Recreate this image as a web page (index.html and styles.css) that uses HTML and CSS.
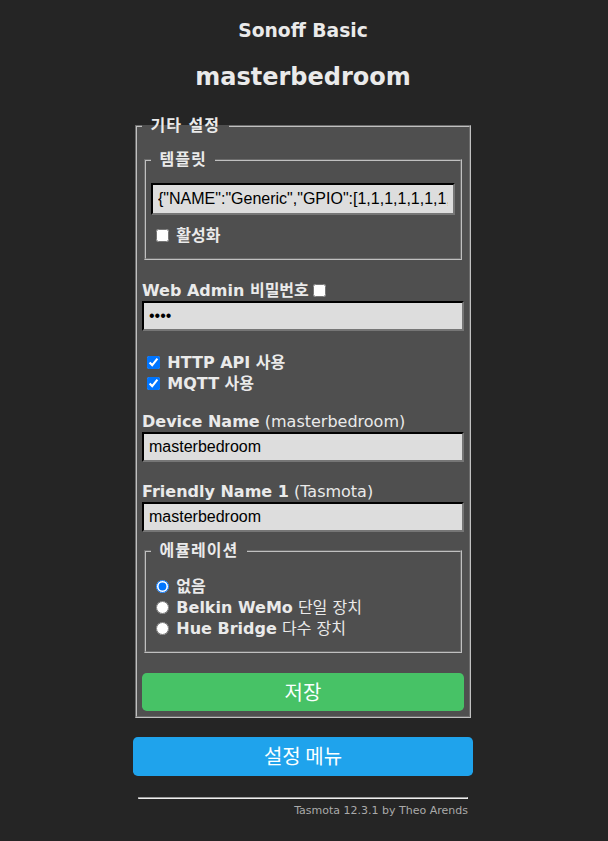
FILE: index.html
```
<!DOCTYPE html>
<html>
  <head>
    <title>Sonoff Basic - 기타 설정</title>
    <link rel="stylesheet" href="styles.css">
  </head>
  <body>
    <div class="wrap">
      <div class="head">
        <h3>Sonoff Basic</h3>
        <h2>masterbedroom</h2>
      </div>
      <fieldset class="box">
        <legend><b>&nbsp;기타 설정&nbsp;</b></legend>
        <form method="get" action="co">
          <p class="gap"></p>
          <fieldset class="box tpl">
            <legend><b>&nbsp;템플릿&nbsp;</b></legend>
            <p class="tpl-in"><input id="t1" class="field" value='{"NAME":"Generic","GPIO":[1,1,1,1,1,1,1,1,1,1,1,1,1,1],"FLAG":0,"BASE":18}'></p>
            <p class="tpl-on"><label><input id="t2" type="checkbox" class="tick"><b>활성화</b></label></p>
          </fieldset>
          <br>
          <label class="ko"><b>Web Admin 비밀번호</b><input type="checkbox" class="tick after"></label><br>
          <input id="wp" class="field line" type="password" value="****">
          <div class="opts">
            <label class="ko"><input id="b1" type="checkbox" class="tick" checked><b>HTTP API 사용</b></label><br>
            <label class="ko"><input id="b2" type="checkbox" class="tick" checked><b>MQTT 사용</b></label>
          </div>
          <label><b>Device Name</b> (masterbedroom)</label><br>
          <input id="dn" class="field line" value="masterbedroom">
          <br><br>
          <label><b>Friendly Name 1</b> (Tasmota)</label><br>
          <input id="a0" class="field line" value="masterbedroom">
          <br>
          <fieldset class="box emu">
            <legend><b>&nbsp;에뮬레이션&nbsp;</b></legend>
            <p>
              <input id="r1" name="emu" type="radio" class="tick" checked><b>없음</b><br>
              <input id="r2" name="emu" type="radio" class="tick"><b>Belkin WeMo</b> 단일 장치<br>
              <input id="r3" name="emu" type="radio" class="tick"><b>Hue Bridge</b> 다수 장치<br>
            </p>
          </fieldset>
          <br>
          <button name="save" type="submit" class="button bgrn">저장</button>
        </form>
      </fieldset>
      <form class="menu" action="cn" method="get">
        <button class="button">설정 메뉴</button>
      </form>
      <div class="foot">
        <hr>
        <a href="#">Tasmota 12.3.1 by Theo Arends</a>
      </div>
    </div>
  </body>
</html>
```

FILE: styles.css
```
body {
  text-align: center;
  font-family: "DejaVu Sans", "Noto Sans CJK KR", sans-serif;
  background: #252525;
  margin: 8px 9px 8px 7px;
}

.wrap {
  text-align: left;
  display: inline-block;
  color: #eaeaea;
  min-width: 340px;
  padding: 5px;
  font-size: 16px;
  line-height: 20px;
}

.head {
  text-align: center;
  padding: 5px;
}

.head h3 {
  font-size: 18.72px;
  line-height: 22px;
  margin: 2px 0 0;
}

.head h2 {
  font-size: 24px;
  line-height: 28px;
  margin: 21px 0 19px;
}

.box {
  background: #4f4f4f;
  padding: 5px;
  margin: 0 2px;
  border: 2px groove #c0c0c0;
}

.box legend {
  padding: 0 2px;
  line-height: 21px;
  letter-spacing: 1px;
}

.tpl p,
.emu p,
.ko {
  line-height: 21px;
}

p {
  margin: 8px 0;
}

.gap {
  margin: 8px 0;
}

.tpl .tpl-in {
  margin-bottom: 10px;
}

.tpl .tpl-on {
  margin-bottom: 7px;
}

.opts {
  padding: 21px 0 18px;
}

.emu {
  margin-top: 8px;
}

.emu p {
  margin: 10px 0 7px;
}

.field {
  width: 100%;
  box-sizing: border-box;
  padding: 5px;
  font-size: 16px;
  line-height: 18px;
  font-family: "Liberation Sans", Arial, sans-serif;
  background: #dddddd;
  color: #000000;
  border: 2px inset #767676;
  border-top-color: #1a1a1a;
  border-left-color: #1a1a1a;
  margin: 0;
}

.field.line {
  height: 30px;
  padding: 4px 5px;
  vertical-align: top;
}

.tick {
  width: 1em;
  margin: 3px 7px 3px 5px;
  vertical-align: -1px;
}

.tick.after {
  margin-left: 4px;
}

.button {
  border: 0;
  border-radius: 0.3rem;
  background: #1fa3ec;
  color: #faffff;
  line-height: 2.4rem;
  font-size: 20px;
  font-family: "Noto Sans CJK KR", "DejaVu Sans", sans-serif;
  width: 100%;
  padding: 0;
  cursor: pointer;
}

.button:hover {
  background: #0e70a4;
}

.bgrn {
  background: #47c266;
}

.menu {
  margin: 19px 0 0;
}

.foot {
  text-align: right;
  font-size: 11px;
  line-height: 13px;
  padding: 5px;
}

.foot hr {
  margin: 16px 0 5px;
}

.foot a {
  color: #aaa;
  text-decoration: none;
}
```
